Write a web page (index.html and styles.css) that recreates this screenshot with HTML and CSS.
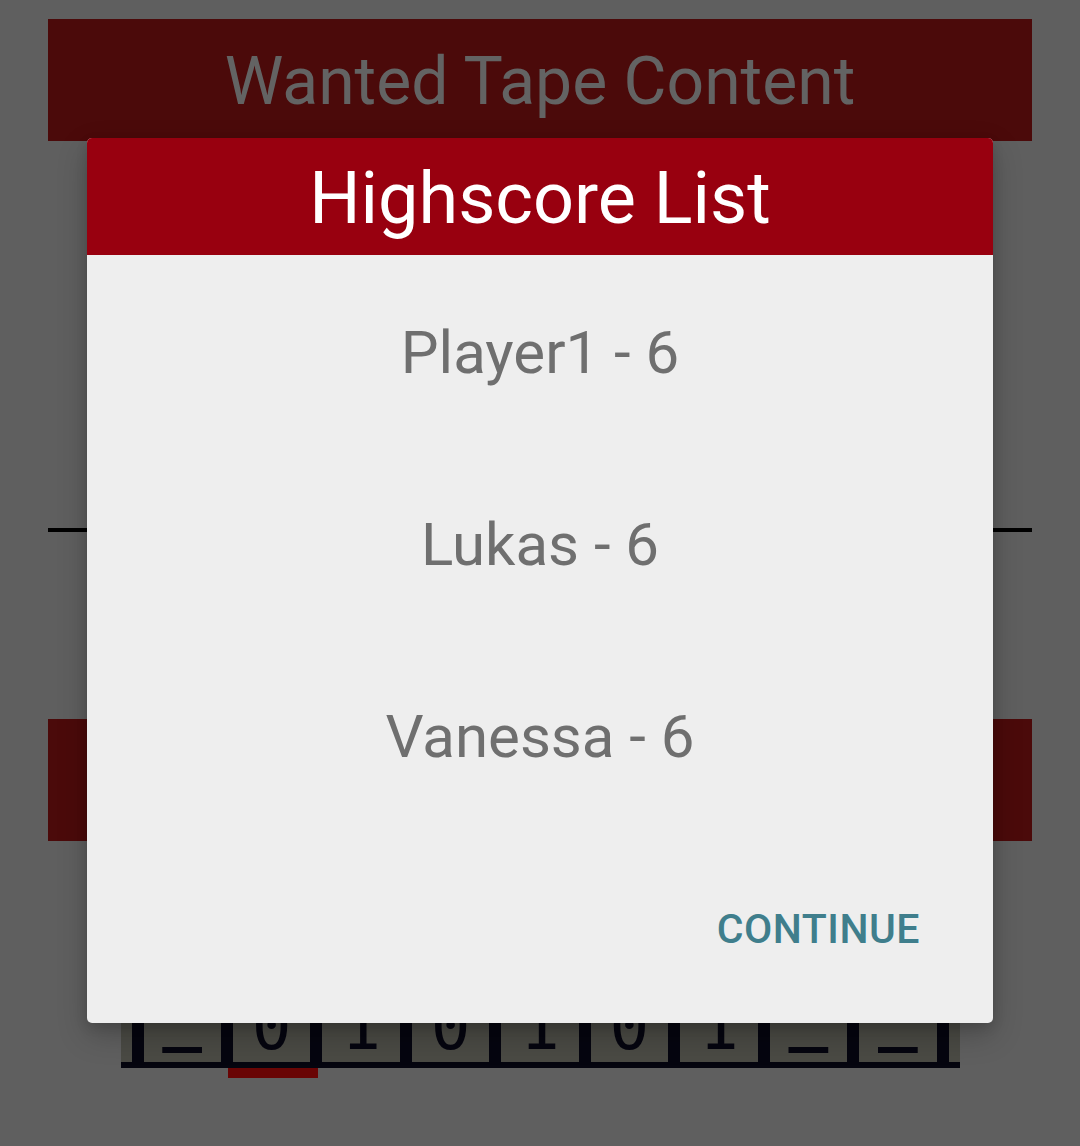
FILE: index.html
```html
<!DOCTYPE html>
<html lang="en">
<head>
<meta charset="utf-8">
<title>Highscore List</title>
<link rel="stylesheet" href="styles.css">
</head>
<body>
<div class="screen">
  <header class="title-bar">Wanted Tape Content</header>
  <div class="board">
    <div class="rule"></div>
  </div>
  <div class="bar"></div>
  <div class="tape-area">
    <div class="tape">
      <div class="cells">
        <div class="cell"><span class="blank">_</span></div>
        <div class="cell">0</div>
        <div class="cell">1</div>
        <div class="cell">0</div>
        <div class="cell">1</div>
        <div class="cell">0</div>
        <div class="cell">1</div>
        <div class="cell"><span class="blank">_</span></div>
        <div class="cell"><span class="blank">_</span></div>
      </div>
    </div>
    <div class="head-row"><div class="head"></div></div>
  </div>
</div>

<div class="dialog" role="dialog">
  <div class="dialog-title">Highscore List</div>
  <div class="dialog-body">
    <ul class="scores">
      <li>Player1 - 6</li>
      <li>Lukas - 6</li>
      <li>Vanessa - 6</li>
    </ul>
    <div class="actions">
      <button class="btn">CONTINUE</button>
    </div>
  </div>
</div>
</body>
</html>
```

FILE: styles.css
```css
html, body {
  margin: 0;
  padding: 0;
}
body {
  width: 1080px;
  height: 1146px;
  overflow: hidden;
  background: #5f5f5f;
  font-family: Roboto, "Noto Sans", sans-serif;
}

.screen {
  padding: 19px 48px 0;
  display: flex;
  flex-direction: column;
}

.title-bar {
  height: 118px;
  padding-top: 4px;
  background: #4b0a0a;
  color: #636363;
  font-size: 66px;
  line-height: 118px;
  text-align: center;
}

.board {
  height: 578px;
  display: flex;
  flex-direction: column;
  justify-content: flex-end;
  padding-bottom: 187px;
  box-sizing: border-box;
}
.rule {
  height: 4px;
  background: #000;
}

.bar {
  height: 122px;
  background: #4b0a0a;
}

.tape-area {
  display: flex;
  flex-direction: column;
  align-items: center;
  margin-top: 91px;
}

.tape {
  width: 839px;
  box-sizing: border-box;
  padding: 0 11px;
  background: #4a4a44;
  border-bottom: 6px solid #05050f;
}
.cells {
  display: grid;
  grid-template-columns: repeat(9, 1fr);
  border-right: 12px solid #05050f;
}
.cell {
  height: 130px;
  box-sizing: border-box;
  padding-bottom: 5px;
  border-left: 12px solid #05050f;
  display: flex;
  align-items: flex-end;
  justify-content: center;
  font-family: "DejaVu Sans Mono", "Liberation Mono", monospace;
  font-size: 66px;
  line-height: 60px;
  color: #05050f;
}
.blank {
  margin-bottom: 12px;
  font-weight: bold;
}

.head-row {
  width: 839px;
  display: flex;
}
.head {
  margin-left: 107px;
  width: 90px;
  height: 10px;
  background: #690505;
}

.dialog {
  position: absolute;
  left: 87px;
  top: 138px;
  width: 906px;
  height: 885px;
  background: #eeeeee;
  border-radius: 5px;
  overflow: hidden;
  box-shadow: 0 12px 30px rgba(0, 0, 0, 0.22), 0 4px 12px rgba(0, 0, 0, 0.12);
  display: flex;
  flex-direction: column;
}

.dialog-title {
  height: 113px;
  padding-top: 4px;
  background: #98000f;
  color: #ffffff;
  font-size: 72px;
  line-height: 113px;
  text-align: center;
}

.dialog-body {
  flex: 1;
  display: flex;
  flex-direction: column;
}

.scores {
  list-style: none;
  margin: 0;
  padding: 2px 0 0;
}
.scores li {
  font-size: 60px;
  line-height: 192px;
  color: #6f6f6f;
  text-align: center;
}

.actions {
  display: flex;
  justify-content: flex-end;
  margin-top: 66px;
  padding-right: 73px;
}
.btn {
  border: 0;
  background: transparent;
  padding: 0;
  font-family: Roboto, "Noto Sans", sans-serif;
  font-weight: 500;
  font-size: 41px;
  line-height: 60px;
  letter-spacing: 0.5px;
  color: #3f7e8c;
}
```
